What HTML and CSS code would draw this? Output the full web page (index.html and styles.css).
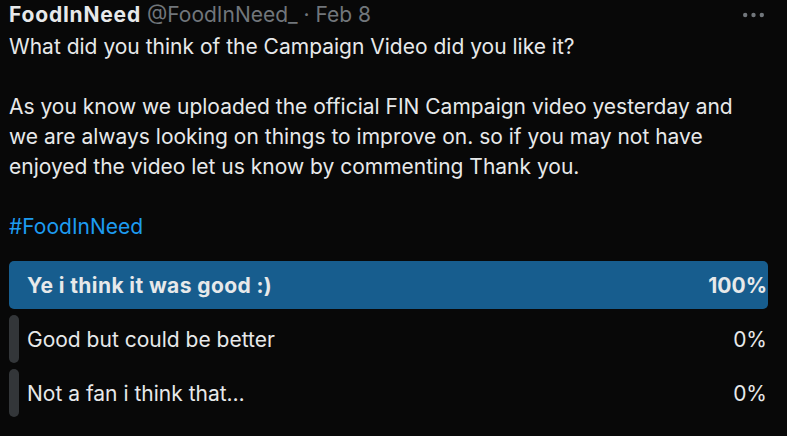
FILE: index.html
```html
<!DOCTYPE html>
<html>
<head>
<meta charset="utf-8">
<link rel="stylesheet" href="styles.css">
</head>
<body>
<div class="tweet">
  <div class="header">
    <span class="name">FoodInNeed</span>
    <span class="meta">@FoodInNeed_ · Feb 8</span>
    <span class="more">
      <svg width="21" height="6" viewBox="0 0 21 6"><circle cx="2.2" cy="3" r="2.2" fill="#71767b"/><circle cx="10.5" cy="3" r="2.2" fill="#71767b"/><circle cx="18.8" cy="3" r="2.2" fill="#71767b"/></svg>
    </span>
  </div>
  <div class="body">
    <p>What did you think of the Campaign Video did you like it?</p>
    <p>As you know we uploaded the official FIN Campaign video yesterday and<br>we are always looking on things to improve on. so if you may not have<br>enjoyed the video let us know by commenting Thank you.</p>
    <p><span class="tag">#FoodInNeed</span></p>
  </div>
  <div class="poll">
    <div class="choice">
      <div class="bar win" style="width:100%"></div>
      <span class="label bold">Ye i think it was good :)</span>
      <span class="pct bold">100%</span>
    </div>
    <div class="choice">
      <div class="bar" style="width:10px"></div>
      <span class="label">Good but could be better</span>
      <span class="pct">0%</span>
    </div>
    <div class="choice">
      <div class="bar" style="width:10px"></div>
      <span class="label">Not a fan i think that…</span>
      <span class="pct">0%</span>
    </div>
  </div>
</div>
</body>
</html>
```
FILE: styles.css
```css
html, body {
  margin: 0;
  background: #080808;
}
body {
  font-family: Inter, "Open Sans", sans-serif;
  color: #e7e9ea;
  font-size: 21px;
}
.tweet {
  padding: 0 19px 0 9px;
}
.header {
  display: flex;
  align-items: center;
  height: 30px;
  line-height: 30px;
  gap: 6px;
}
.name {
  font-weight: 700;
  font-size: 21px;
  letter-spacing: 0.8px;
}
.meta {
  color: #71767b;
  font-size: 21px;
}
.more {
  margin-left: auto;
  display: flex;
  align-items: center;
  margin-right: 4px;
  margin-top: -1px;
}
.body {
  line-height: 30px;
  margin-top: 2px;
}
.body p {
  margin: 0 0 30px 0;
}
.body p:last-child {
  margin-bottom: 0;
}
.tag {
  color: #1d9bf0;
}
.poll {
  margin-top: 19px;
  display: flex;
  flex-direction: column;
  gap: 6px;
}
.choice {
  position: relative;
  height: 48px;
  display: flex;
  align-items: center;
  justify-content: space-between;
  padding: 0 1px 0 18px;
}
.bar {
  position: absolute;
  left: 0;
  top: 0;
  bottom: 0;
  background: #333639;
  border-radius: 5px;
}
.bar.win {
  background: #175d8e;
}
.label, .pct {
  position: relative;
}
.bold {
  font-weight: 700;
}
.label.bold {
  letter-spacing: 0.4px;
}
```
